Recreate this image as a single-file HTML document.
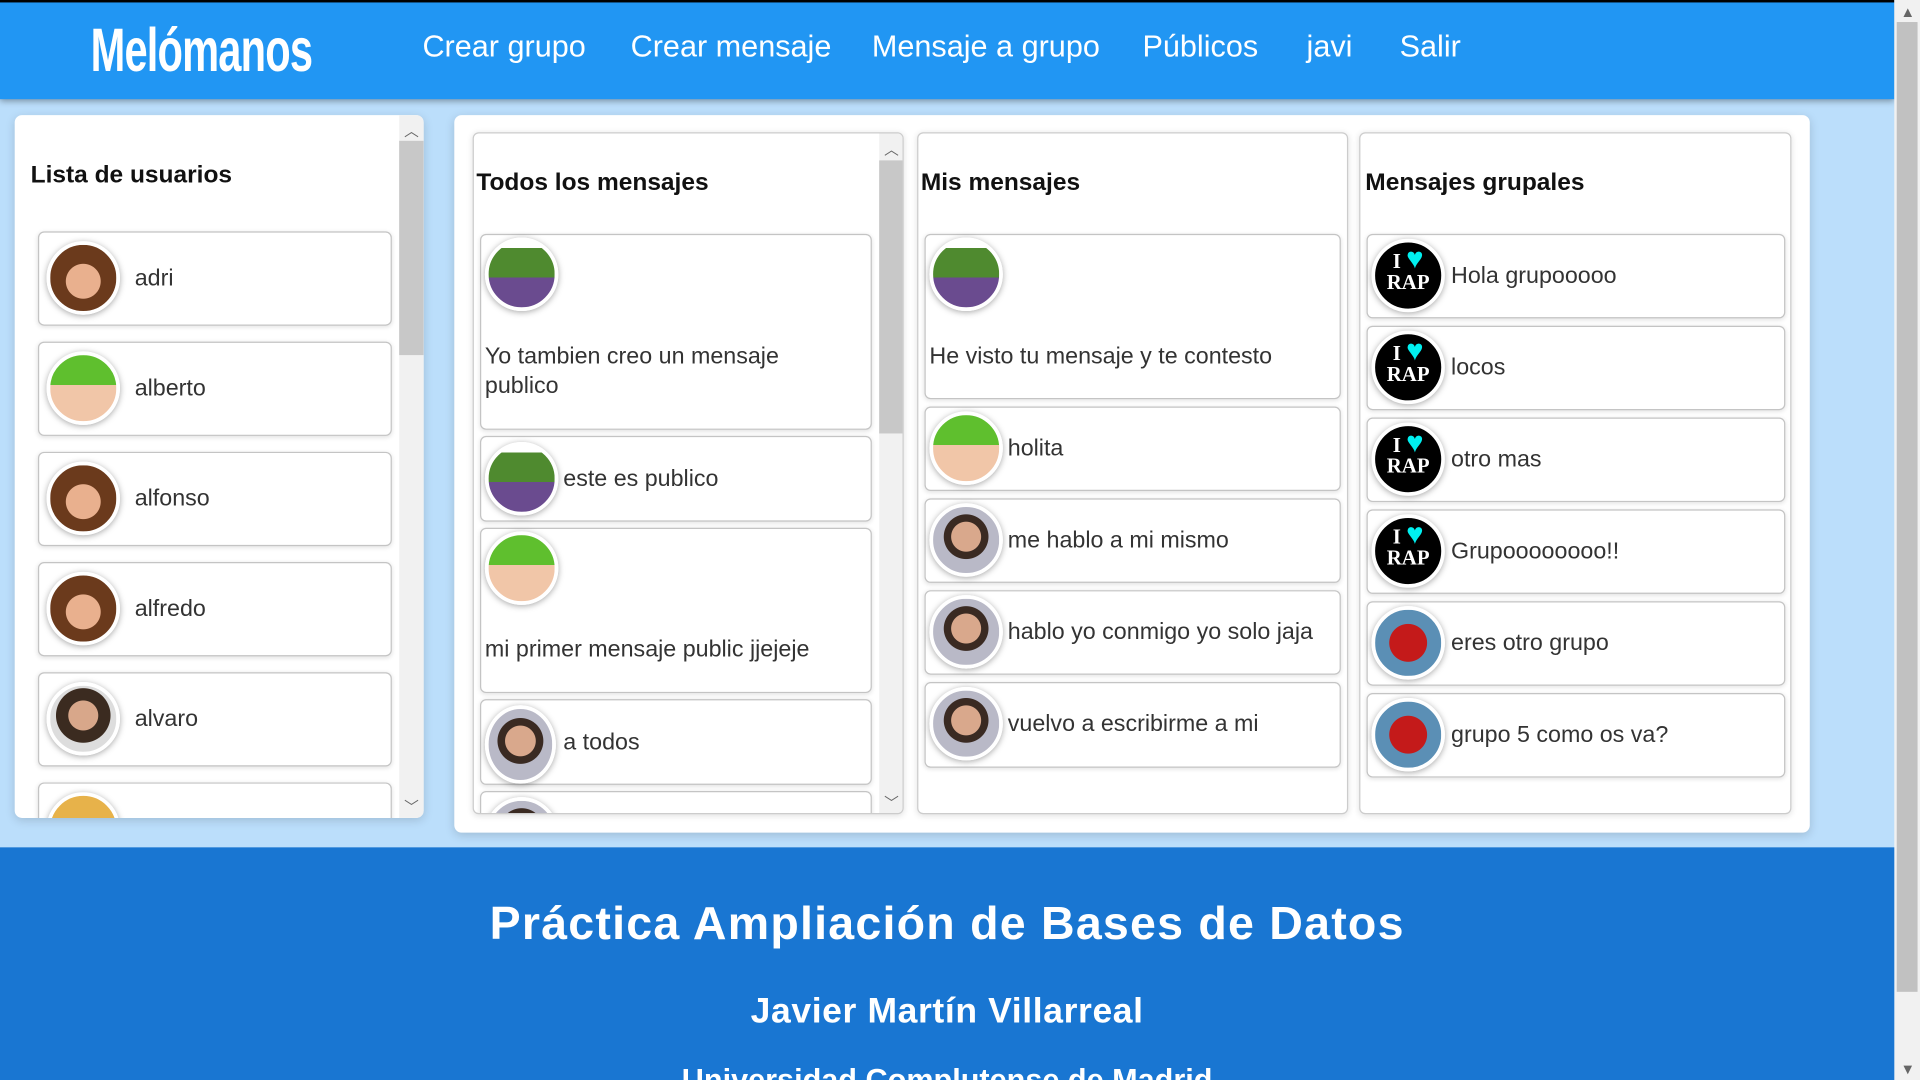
<!DOCTYPE html>
<html><head><meta charset="utf-8"><style>
*{box-sizing:border-box;margin:0;padding:0}
html,body{width:1920px;height:1080px;overflow:hidden;background:#bbdefb}
#s{position:absolute;left:0;top:0;width:1568px;height:882px;transform:scale(1.22449);transform-origin:0 0;font-family:"Liberation Sans",sans-serif;background:#bbdefb;overflow:hidden}
.a{position:absolute}
#hdr{left:0;top:0;width:1547px;height:81px;background:#2196f3;border-top:2px solid #000;box-shadow:0 2px 5px rgba(0,0,0,.35)}
.logo{left:74px;top:10px;color:#fff;font-size:50px;font-weight:bold;letter-spacing:-1px;transform:scaleX(.68);transform-origin:0 0;font-family:"Liberation Sans Narrow","Liberation Sans",sans-serif}
.nav{top:22px;color:#fff;font-size:25px;font-weight:300}
.panel{background:#fff;border-radius:6px;box-shadow:0 2px 8px rgba(0,0,0,.15)}
.col{background:#fff;border:1px solid #ccc;border-radius:5px;overflow:hidden;box-shadow:0 1px 5px rgba(0,0,0,.12)}
.h{font-weight:bold;font-size:20px;color:#111}
.card{background:#fff;border:1px solid #c4c4c4;border-radius:5px;box-shadow:0 1px 4px rgba(0,0,0,.12)}
.av{position:absolute;width:60px;height:60px;border-radius:50%;border:3px solid #fff;box-shadow:0 1px 5px rgba(0,0,0,.35);overflow:hidden}
.t{position:absolute;font-size:19px;color:#333;font-weight:300;line-height:24px}
.sb{background:#f1f1f1}
.th{background:#c8c8c8}
.arr{position:absolute;color:#666;font-size:12px;width:20px;text-align:center}
.boy{background:radial-gradient(circle at 50% 55%,#e9b08e 0 35%,#6b3a1c 36% 100%)}
.baby{background:linear-gradient(#5fbf2e 0 45%,#f1c6a8 45%)}
.hulk{background:linear-gradient(#fff 0 10%,#4f8a2f 10% 55%,#6a4b8f 55% 100%)}
.rdj{background:radial-gradient(circle at 50% 45%,#d9a88c 0 30%,#3a2a22 31% 45%,#b9b9c7 46%)}
.alv{background:radial-gradient(circle at 50% 45%,#d8a78a 0 30%,#3b2b20 31% 55%,#ddd 56%)}
.rap{background:#000;color:#fff;font-family:"Liberation Serif",serif;font-weight:bold;font-size:17px;line-height:17px;text-align:center;padding-top:6px}
.rap b{color:#00f0f0;font-size:24px}
.rock{background:radial-gradient(#c41a1a 0 40%,#5b8fb5 41%)}
.ft{left:0;top:692px;width:1547px;height:190px;background:#1976d2;color:#fff;text-align:center}
</style></head><body><div id="s">
<div id="hdr" class="a">
<div class="a logo">Melómanos</div>
<div class="a nav" style="left:345px">Crear grupo</div>
<div class="a nav" style="left:515px">Crear mensaje</div>
<div class="a nav" style="left:712px">Mensaje a grupo</div>
<div class="a nav" style="left:933px">Públicos</div>
<div class="a nav" style="left:1067px">javi</div>
<div class="a nav" style="left:1143px">Salir</div>
</div>
<div class="a" style="left:1547px;top:0;width:21px;height:882px;background:#f1f1f1"></div>
<div class="a" style="left:1549px;top:18px;width:17px;height:792px;background:#c1c1c1"></div>
<div class="arr" style="left:1548px;top:3px">▲</div><div class="arr" style="left:1548px;top:866px">▼</div>

<div class="a panel" style="left:12px;top:94px;width:334px;height:574px;overflow:hidden">
<div class="a h" style="left:13px;top:38px">Lista de usuarios</div>
<div class="a sb" style="left:314px;top:0;width:20px;height:574px"></div>
<div class="a th" style="left:314px;top:21px;width:20px;height:175px"></div>
<div class="arr" style="left:314px;top:4px">︿</div><div class="arr" style="left:314px;top:556px">﹀</div>
<div class="a card" style="left:19px;top:95px;width:289px;height:77px"><div class="av boy" style="left:6px;top:7px"></div><div class="t" style="left:78px;top:26px">adri</div></div>
<div class="a card" style="left:19px;top:185px;width:289px;height:77px"><div class="av baby" style="left:6px;top:7px"></div><div class="t" style="left:78px;top:26px">alberto</div></div>
<div class="a card" style="left:19px;top:275px;width:289px;height:77px"><div class="av boy" style="left:6px;top:7px"></div><div class="t" style="left:78px;top:26px">alfonso</div></div>
<div class="a card" style="left:19px;top:365px;width:289px;height:77px"><div class="av boy" style="left:6px;top:7px"></div><div class="t" style="left:78px;top:26px">alfredo</div></div>
<div class="a card" style="left:19px;top:455px;width:289px;height:77px"><div class="av alv" style="left:6px;top:7px"></div><div class="t" style="left:78px;top:26px">alvaro</div></div>
<div class="a card" style="left:19px;top:545px;width:289px;height:77px"><div class="av" style="left:6px;top:7px;background:#e7b24a"></div></div>
</div>

<div class="a panel" style="left:371px;top:94px;width:1107px;height:586px">
<div class="a col" style="left:15px;top:14px;width:352px;height:557px">
<div class="a h" style="left:2px;top:29px">Todos los mensajes</div>
<div class="a sb" style="left:331px;top:0;width:20px;height:557px"></div>
<div class="a th" style="left:331px;top:22px;width:20px;height:223px"></div>
<div class="arr" style="left:331px;top:4px">︿</div><div class="arr" style="left:331px;top:538px">﹀</div>
<div class="a card" style="left:5px;top:82px;width:320px;height:160px"><div class="av hulk" style="left:3px;top:2px"></div><div class="t" style="left:3px;top:88px">Yo tambien creo un mensaje<br>publico</div></div>
<div class="a card" style="left:5px;top:247px;width:320px;height:70px"><div class="av hulk" style="left:3px;top:4px"></div><div class="t" style="left:67px;top:23px">este es publico</div></div>
<div class="a card" style="left:5px;top:322px;width:320px;height:135px"><div class="av baby" style="left:3px;top:2px"></div><div class="t" style="left:3px;top:87px">mi primer mensaje public jjejeje</div></div>
<div class="a card" style="left:5px;top:462px;width:320px;height:70px"><div class="av rdj" style="left:3px;top:4px;width:58px;height:64px"></div><div class="t" style="left:67px;top:23px">a todos</div></div>
<div class="a card" style="left:5px;top:537px;width:320px;height:70px"><div class="av rdj" style="left:3px;top:4px"></div></div>
</div>
<div class="a col" style="left:378px;top:14px;width:352px;height:557px">
<div class="a h" style="left:2px;top:29px">Mis mensajes</div>
<div class="a card" style="left:5px;top:82px;width:340px;height:135px"><div class="av hulk" style="left:3px;top:2px"></div><div class="t" style="left:3px;top:88px">He visto tu mensaje y te contesto</div></div>
<div class="a card" style="left:5px;top:223px;width:340px;height:69px"><div class="av baby" style="left:3px;top:3px"></div><div class="t" style="left:67px;top:22px">holita</div></div>
<div class="a card" style="left:5px;top:298px;width:340px;height:69px"><div class="av rdj" style="left:3px;top:3px"></div><div class="t" style="left:67px;top:22px">me hablo a mi mismo</div></div>
<div class="a card" style="left:5px;top:373px;width:340px;height:69px"><div class="av rdj" style="left:3px;top:3px"></div><div class="t" style="left:67px;top:22px">hablo yo conmigo yo solo jaja</div></div>
<div class="a card" style="left:5px;top:448px;width:340px;height:70px"><div class="av rdj" style="left:3px;top:3px"></div><div class="t" style="left:67px;top:22px">vuelvo a escribirme a mi</div></div>
</div>
<div class="a col" style="left:739px;top:14px;width:353px;height:557px">
<div class="a h" style="left:4px;top:29px">Mensajes grupales</div>
<div class="a card" style="left:5px;top:82px;width:342px;height:69px"><div class="av rap" style="left:3px;top:3px">I <b>♥</b><br>RAP</div><div class="t" style="left:68px;top:22px">Hola grupooooo</div></div>
<div class="a card" style="left:5px;top:157px;width:342px;height:69px"><div class="av rap" style="left:3px;top:3px">I <b>♥</b><br>RAP</div><div class="t" style="left:68px;top:22px">locos</div></div>
<div class="a card" style="left:5px;top:232px;width:342px;height:69px"><div class="av rap" style="left:3px;top:3px">I <b>♥</b><br>RAP</div><div class="t" style="left:68px;top:22px">otro mas</div></div>
<div class="a card" style="left:5px;top:307px;width:342px;height:69px"><div class="av rap" style="left:3px;top:3px">I <b>♥</b><br>RAP</div><div class="t" style="left:68px;top:22px">Grupoooooooo!!</div></div>
<div class="a card" style="left:5px;top:382px;width:342px;height:69px"><div class="av rock" style="left:3px;top:3px"></div><div class="t" style="left:68px;top:22px">eres otro grupo</div></div>
<div class="a card" style="left:5px;top:457px;width:342px;height:69px"><div class="av rock" style="left:3px;top:3px"></div><div class="t" style="left:68px;top:22px">grupo 5 como os va?</div></div>
</div>
</div>

<div class="a ft">
<div style="position:absolute;left:0;width:1547px;top:42px;font-size:38px;font-weight:bold;letter-spacing:1px">Práctica Ampliación de Bases de Datos</div>
<div style="position:absolute;left:0;width:1547px;top:118px;font-size:29px;font-weight:bold;letter-spacing:.5px">Javier Martín Villarreal</div>
<div style="position:absolute;left:0;width:1547px;top:176px;font-size:25px;font-weight:bold">Universidad Complutense de Madrid</div>
</div>
</div></body></html>
